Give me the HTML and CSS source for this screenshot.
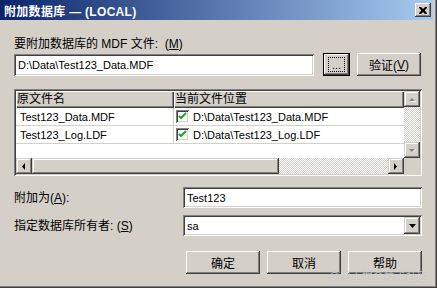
FILE: index.html
```html
<!DOCTYPE html>
<html lang="zh-CN">
<head>
  <meta charset="UTF-8" />
  <title>附加数据库 — (LOCAL)</title>
  <link rel="stylesheet" href="styles.css">
</head>
<body>
  <div class="window">
    <div class="titlebar">
      <span class="title">附加数据库 — (LOCAL)</span>
      <button class="close-btn">
        <svg width="8" height="7" viewBox="0 0 8 7"><path d="M0 0h2l2 2 2-2h2v1l-2 2v1l2 2v1h-2l-2-2-2 2h-2v-1l2-2v-1l-2-2z" fill="#000"/></svg>
      </button>
    </div>

    <div class="content">
      <div class="label top-label">要附加数据库的 MDF 文件:&nbsp; (<u>M</u>)</div>

      <div class="file-row">
        <div class="field file-field latin">D:\Data\Test123_Data.MDF</div>
        <button class="btn default-btn browse-btn"><span class="focus-rect">...</span></button>
        <button class="btn verify-btn">验证(<u>V</u>)</button>
      </div>

      <div class="listview">
        <div class="lv-top">
          <div class="lv-grid">
            <div class="lv-header">
              <div class="lv-hcell col1">原文件名</div>
              <div class="lv-hcell col2">当前文件位置</div>
            </div>
            <div class="lv-row">
              <div class="lv-cell col1 latin">Test123_Data.MDF</div>
              <div class="lv-cell col2 latin">
                <span class="checkbox"><svg width="9" height="9" viewBox="0 0 9 9"><path d="M1 4l2 2 5-5" stroke="#21a121" stroke-width="2" fill="none"/></svg></span>
                D:\Data\Test123_Data.MDF
              </div>
            </div>
            <div class="lv-row">
              <div class="lv-cell col1 latin">Test123_Log.LDF</div>
              <div class="lv-cell col2 latin">
                <span class="checkbox"><svg width="9" height="9" viewBox="0 0 9 9"><path d="M1 4l2 2 5-5" stroke="#21a121" stroke-width="2" fill="none"/></svg></span>
                D:\Data\Test123_Log.LDF
              </div>
            </div>
          </div>
          <div class="vscroll">
            <div class="sb-btn">
              <svg width="7" height="5" viewBox="0 0 7 5"><path d="M4 2l3 3h-6z" fill="#fff"/><path d="M3 0l3 3h-6z" fill="#808080" transform="translate(0 1)"/></svg>
            </div>
            <div class="sb-track"></div>
            <div class="sb-btn">
              <svg width="7" height="5" viewBox="0 0 7 5"><path d="M1 1h6l-3 3z" fill="#fff"/><path d="M0 0h6l-3 3z" fill="#808080" transform="translate(0 1)"/></svg>
            </div>
          </div>
        </div>
        <div class="lv-bottom">
          <div class="hscroll">
            <div class="sb-btn">
              <svg width="4" height="7" viewBox="0 0 4 7"><path d="M3 0v7l-3-3.5z" fill="#000"/></svg>
            </div>
            <div class="sb-thumb"></div>
            <div class="sb-track"></div>
            <div class="sb-btn">
              <svg width="4" height="7" viewBox="0 0 4 7"><path d="M0 0v7l3-3.5z" fill="#000"/></svg>
            </div>
          </div>
          <div class="sb-corner"></div>
        </div>
      </div>

      <div class="form-row attach-row">
        <div class="label">附加为(<u>A</u>):</div>
        <div class="field latin">Test123</div>
      </div>

      <div class="form-row owner-row">
        <div class="label">指定数据库所有者:&nbsp;(<u>S</u>)</div>
        <div class="field combo latin">
          <span class="combo-text">sa</span>
          <span class="combo-btn">
            <svg width="7" height="4" viewBox="0 0 7 4"><path d="M0 0h7l-3.5 4z" fill="#000"/></svg>
          </span>
        </div>
      </div>

      <div class="button-row">
        <button class="btn action-btn">确定</button>
        <button class="btn action-btn">取消</button>
        <button class="btn action-btn">帮助</button>
      </div>
    </div>

    <div class="watermark">@稀土掘金技术社区</div>
  </div>
</body>
</html>
```

FILE: styles.css
```css
* {
  box-sizing: border-box;
}

body {
  margin: 0;
  font-family: "Liberation Sans", "Noto Sans CJK SC", sans-serif;
  font-size: 12px;
  color: #000;
  background: #d4d0c8;
}

.window {
  position: relative;
  width: 437px;
  height: 288px;
  background: #d4d0c8;
  padding: 0 4px 3px 0;
  box-shadow: inset -1px -1px #404040, inset -2px -2px #808080;
  display: flex;
  flex-direction: column;
}

.titlebar {
  flex: none;
  height: 20px;
  background: linear-gradient(90deg, #0a246a, #a6caf0);
  color: #fff;
  display: flex;
  align-items: center;
  justify-content: space-between;
  padding: 0 2px 0 4px;
}

.title {
  font-weight: bold;
  font-size: 12px;
  letter-spacing: 0.3px;
}

.close-btn {
  width: 16px;
  height: 14px;
  padding: 0;
  border: 0;
  background: #d4d0c8;
  display: flex;
  align-items: center;
  justify-content: center;
  box-shadow: inset -1px -1px #404040, inset 1px 1px #fff, inset -2px -2px #808080, inset 2px 2px #d4d0c8;
}

.content {
  flex: 1;
  padding: 17px 11px 0 14px;
  display: flex;
  flex-direction: column;
}

.label {
  line-height: 14px;
  white-space: nowrap;
}

.latin {
  font-size: 11px;
}

u {
  text-decoration: underline;
  text-underline-offset: 1px;
}

.field {
  background: #fff;
  height: 21px;
  padding: 0 4px;
  display: flex;
  align-items: center;
  white-space: nowrap;
  box-shadow: inset 1px 1px #808080, inset -1px -1px #fff, inset 2px 2px #404040, inset -2px -2px #d4d0c8;
}

.btn {
  font-family: inherit;
  font-size: 12px;
  color: #000;
  background: #d4d0c8;
  border: 0;
  padding: 0;
  display: flex;
  align-items: center;
  justify-content: center;
  box-shadow: inset -1px -1px #404040, inset 1px 1px #fff, inset -2px -2px #808080, inset 2px 2px #d4d0c8;
}

/* file row */
.file-row {
  margin-top: 2px;
  display: flex;
  align-items: center;
  height: 23px;
}

.file-field {
  width: 300px;
  height: 22px;
}

.browse-btn {
  width: 27px;
  height: 23px;
  margin-left: 9px;
}

.default-btn {
  border: 1px solid #000;
  box-shadow: inset -1px -1px #404040, inset 1px 1px #fff, inset -2px -2px #808080;
}

.focus-rect {
  width: 17px;
  height: 15px;
  border: 1px dotted #000;
  display: flex;
  align-items: flex-end;
  justify-content: center;
  font-size: 11px;
  line-height: 12px;
}

.verify-btn {
  width: 64px;
  height: 23px;
  margin-left: 7px;
}

/* list view */
.listview {
  margin-top: 13px;
  height: 87px;
  padding: 2px;
  background: #fff;
  box-shadow: inset 1px 1px #808080, inset -1px -1px #fff, inset 2px 2px #404040, inset -2px -2px #d4d0c8;
  display: flex;
  flex-direction: column;
}

.lv-top {
  flex: 1;
  display: flex;
  min-height: 0;
}

.lv-grid {
  flex: 1;
  background: #fff;
  overflow: hidden;
}

.lv-header {
  display: flex;
  height: 17px;
}

.lv-hcell {
  background: #d4d0c8;
  padding-left: 1px;
  line-height: 16px;
  box-shadow: inset 1px 1px #fff, inset -1px -1px #404040, inset -2px -2px #808080;
}

.col1 {
  width: 158px;
  flex: none;
}

.col2 {
  flex: 1;
}

.lv-row {
  display: flex;
  height: 18px;
  border-bottom: 1px solid #d4d0c8;
}

.lv-cell {
  display: flex;
  align-items: center;
  white-space: nowrap;
}

.lv-cell.col1 {
  padding-left: 4px;
  border-right: 1px solid #d4d0c8;
}

.lv-cell.col2 {
  padding-left: 2px;
  gap: 4px;
}

.checkbox {
  width: 13px;
  height: 13px;
  background: #fff;
  display: flex;
  align-items: center;
  justify-content: center;
  box-shadow: inset 1px 1px #808080, inset -1px -1px #fff, inset 2px 2px #404040, inset -2px -2px #d4d0c8;
}

.vscroll {
  width: 16px;
  display: flex;
  flex-direction: column;
}

.sb-btn {
  width: 16px;
  height: 16px;
  flex: none;
  background: #d4d0c8;
  display: flex;
  align-items: center;
  justify-content: center;
  box-shadow: inset -1px -1px #404040, inset 1px 1px #d4d0c8, inset -2px -2px #808080, inset 2px 2px #fff;
}

.sb-track {
  flex: 1;
  background: repeating-conic-gradient(#fff 0 25%, #d4d0c8 0 50%) 0 0 / 2px 2px;
}

.lv-bottom {
  display: flex;
  height: 16px;
  flex: none;
}

.hscroll {
  flex: 1;
  display: flex;
}

.sb-thumb {
  width: 247px;
  background: #d4d0c8;
  box-shadow: inset -1px -1px #404040, inset 1px 1px #d4d0c8, inset -2px -2px #808080, inset 2px 2px #fff;
}

.sb-corner {
  width: 16px;
  background: #d4d0c8;
}

/* lower form */
.form-row {
  display: grid;
  grid-template-columns: 169px 1fr;
  align-items: center;
  height: 21px;
}

.attach-row {
  margin-top: 11px;
}

.owner-row {
  margin-top: 7px;
}

.combo {
  padding-right: 2px;
  justify-content: space-between;
}

.combo-btn {
  width: 16px;
  height: 17px;
  background: #d4d0c8;
  display: flex;
  align-items: center;
  justify-content: center;
  box-shadow: inset -1px -1px #404040, inset 1px 1px #d4d0c8, inset -2px -2px #808080, inset 2px 2px #fff;
}

.button-row {
  margin-top: 15px;
  display: flex;
  justify-content: flex-end;
  gap: 7px;
}

.action-btn {
  width: 74px;
  height: 23px;
}

.watermark {
  position: absolute;
  right: 9px;
  bottom: 6px;
  font-size: 10.5px;
  line-height: 12px;
  color: rgba(255, 255, 255, 0.55);
  text-shadow: 0 0 1px rgba(120, 120, 120, 0.5);
  letter-spacing: 0.5px;
}
```
